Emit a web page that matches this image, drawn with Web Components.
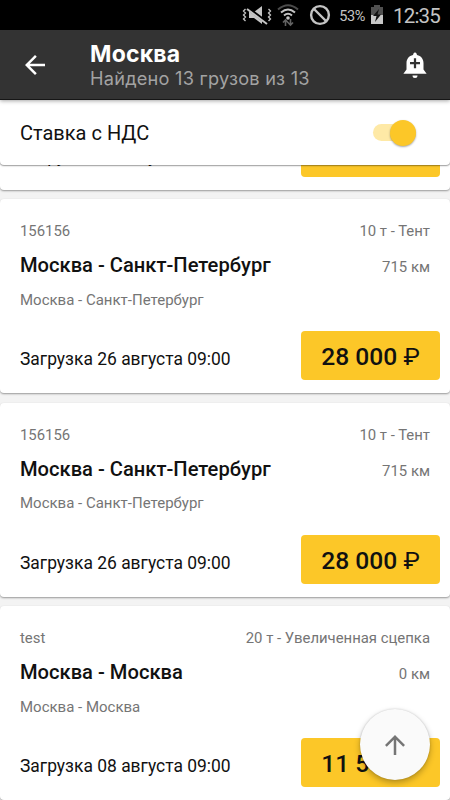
<!DOCTYPE html>
<html lang="ru">
<head>
<meta charset="utf-8">
<title>Москва</title>
<style>
  html, body { height: 100%; }
  body {
    --accent: #fcc728;
    --muted: #757575;
    --text: #111;
    margin: 0;
    background: #f3f3f3;
    color: var(--text);
    font-family: Roboto, "Noto Sans", sans-serif;
    overflow: hidden;
  }
</style>
</head>
<body>
<cargo-app>
  <status-bar slot="top" battery="53%" time="12:35"></status-bar>
  <app-header slot="top" heading="Москва">Найдено 13 грузов из 13</app-header>
  <filter-bar slot="top">Ставка с НДС</filter-bar>

  <!-- only the foot of the first card is scrolled into view -->
  <cargo-card loading="Загрузка 26 августа 09:00"></cargo-card>
  <cargo-card number="156156" body="10 т - Тент" route="Москва - Санкт-Петербург" distance="715 км" loading="Загрузка 26 августа 09:00" price="28 000"></cargo-card>
  <cargo-card number="156156" body="10 т - Тент" route="Москва - Санкт-Петербург" distance="715 км" loading="Загрузка 26 августа 09:00" price="28 000"></cargo-card>
  <cargo-card number="test" body="20 т - Увеличенная сцепка" route="Москва - Москва" distance="0 км" loading="Загрузка 08 августа 09:00" price="11 500"></cargo-card>

  <scroll-top slot="fab"></scroll-top>
</cargo-app>

<script>
/* Shadow root from a template string; attributes are copied into [data-attr] nodes. */
class BaseElement extends HTMLElement {
  constructor() {
    super();
    this.attachShadow({ mode: "open" }).innerHTML = this.constructor.template;
  }

  connectedCallback() {
    for (const node of this.shadowRoot.querySelectorAll("[data-attr]")) {
      node.textContent = this.getAttribute(node.dataset.attr) ?? "";
    }
  }
}

class CargoApp extends BaseElement {
  static template = /* html */ `
<style>
  :host {
    display: flex;
    flex-direction: column;
    position: relative;
    height: 100vh;
    overflow: hidden;
  }
  .top { position: relative; flex: none; }
  /* the list is scrolled to the bottom edge of its last card */
  .list {
    flex: 1;
    min-height: 0;
    display: flex;
    flex-direction: column;
    justify-content: flex-end;
    gap: 9.3px;
    overflow: hidden;
  }
</style>
<div class="top"><slot name="top"></slot></div>
<div class="list"><slot></slot></div>
<slot name="fab"></slot>`;
}

class StatusBar extends BaseElement {
  static template = /* html */ `
<style>
  :host {
    display: flex;
    align-items: center;
    justify-content: flex-end;
    height: 30px;
    padding-right: 10px;
    box-sizing: border-box;
    background: #000;
    color: #c4c4c4;
  }
  svg { display: block; flex: none; }
  .battery { font-size: 14.5px; letter-spacing: -0.45px; margin: 2px 5px 0 8px; }
  .time { font-size: 20.5px; letter-spacing: -0.8px; margin-left: 9px; padding-top: 2px; }
</style>
<svg width="30" height="22" viewBox="0 0 30 22" fill="none" stroke="#c4c4c4">
  <path d="M3.5 5l-2 2 2 2-2 2 2 2-2 2 2 2M26.500 5l2 2-2 2 2 2-2 2 2 2-2 2" stroke-width="1.300"/>
  <path d="M7 8h5l8-6v18l-8-6H7z" fill="#c4c4c4" stroke="none"/>
  <path d="M5 3.500l21 16" stroke="#000" stroke-width="3.500"/>
  <path d="M5 5l20 15" stroke-width="2"/>
</svg>
<svg style="margin-left:5px" width="22" height="24" viewBox="0 0 22 24" fill="none" stroke-width="2">
  <path d="M1 6.500q10-8.500 20 0" stroke="#4b4b4b"/>
  <path d="M4 9.500q7-6 14 0M7 12.500q4-3.500 8 0" stroke="#c4c4c4"/>
  <circle cx="11" cy="15" r="1.800" fill="#c4c4c4"/>
  <path d="M8.500 23v-6M6 19.500l2.500-2.500 2.500 2.500M13.500 16v6M11 19.500l2.500 2.500 2.500-2.500" stroke="#626262" stroke-width="1.600"/>
</svg>
<svg style="margin-left:10px" width="22" height="22" viewBox="0 0 22 22" fill="none" stroke="#c4c4c4" stroke-width="2.400">
  <circle cx="11" cy="11" r="8.900"/><path d="M5 5l12 12"/>
</svg>
<span class="battery" data-attr="battery"></span>
<svg width="14" height="20" viewBox="0 0 14 20">
  <path d="M4 0h6v2h3v8H1V2h3z" fill="#505050"/>
  <path d="M1 10h12v9H1z" fill="#c8c8c8"/>
  <path d="M9 4l-6 7h3.500L5 17l6-7.500H7.500z" fill="#111"/>
</svg>
<span class="time" data-attr="time"></span>`;
}

class AppHeader extends BaseElement {
  static template = /* html */ `
<style>
  :host {
    display: flex;
    align-items: center;
    height: 69.500px;
    padding: 0 20px;
    box-sizing: border-box;
    background: #333;
    border-bottom: 1px solid #161616;
    color: #fff;
    font-family: Inter, "Noto Sans", sans-serif;
    box-shadow: 0 1px 4px rgba(0, 0, 0, .35);
    position: relative;
    z-index: 1;
  }
  .titles { flex: 1; margin-left: 40px; padding-top: 1px; }
  .heading { font-size: 23px; line-height: 26px; font-weight: 700; letter-spacing: .2px; }
  .sub { font-size: 18.200px; line-height: 22px; letter-spacing: .22px; color: #a3a3a3; white-space: nowrap; }
  svg { display: block; flex: none; }
  .back { padding-top: 1px; }
  .bell { padding-top: 2px; }
</style>
<svg class="back" width="30" height="30" viewBox="0 0 24 24" fill="#fff"><path d="M20 11H7.830l5.590-5.590L12 4l-8 8 8 8 1.410-1.410L7.830 13H20v-2z"/></svg>
<div class="titles">
  <div class="heading" data-attr="heading"></div>
  <div class="sub"><slot></slot></div>
</div>
<svg class="bell" width="30" height="30" viewBox="0 0 24 24" fill="#fff">
  <path fill-rule="evenodd" d="M10 20.300a2 2 0 0 0 4 0zM18.800 15.500V10.500c0-3.400-2-5.800-5.200-6.500l-.4-1.200a1.300 1.300 0 0 0-2.400 0L10.400 4c-3.200.7-5.200 3.100-5.200 6.500v5L2.700 19h18.600zM11.100 6.500h1.800v3.100H16v1.800h-3.100v3.100h-1.800v-3.100H8V9.600h3.100z"/>
</svg>`;
}

class FilterBar extends BaseElement {
  static template = /* html */ `
<style>
  :host {
    display: flex;
    align-items: center;
    justify-content: space-between;
    position: relative;
    height: 65.500px;
    padding: 1px 34px 0 20px;
    box-sizing: border-box;
    background: #fff;
    border-radius: 0 0 4px 4px;
    box-shadow: 0 1px 1.500px rgba(0, 0, 0, .4);
    font-size: 20px;
  }
  .track {
    display: flex;
    justify-content: flex-end;
    align-items: center;
    width: 43px;
    height: 17px;
    border-radius: 9px;
    background: #fee9a6;
  }
  .thumb {
    width: 26px;
    height: 26px;
    border-radius: 50%;
    background: var(--accent);
    box-shadow: 0 1px 2px rgba(0, 0, 0, .35);
  }
</style>
<span><slot></slot></span>
<div class="track"><div class="thumb"></div></div>`;
}

class CargoCard extends BaseElement {
  static template = /* html */ `
<style>
  :host {
    display: flex;
    flex-direction: column;
    flex: none;
    height: 194px;
    padding: 23px 10px 13px 20px;
    box-sizing: border-box;
    background: #fff;
    border-radius: 4px;
    box-shadow: 0 1px 2px rgba(0, 0, 0, .38);
  }
  .row {
    display: flex;
    justify-content: space-between;
    padding-right: 10px;
    color: var(--muted);
    font-size: 14.900px;
    line-height: 18px;
  }
  .main { align-items: baseline; margin-top: 12.800px; line-height: 24px; }
  .route { color: var(--text); font-size: 20.150px; font-weight: 500; }
  .sub { margin-top: 11.800px; font-size: 15px; }
  .bottom { display: flex; justify-content: space-between; align-items: center; margin-top: auto; }
  .loading { font-size: 17.450px; padding-top: 7px; }
  .price {
    display: flex;
    align-items: center;
    justify-content: center;
    width: 139px;
    height: 49px;
    padding-top: 2px;
    box-sizing: border-box;
    border-radius: 4px;
    background: var(--accent);
    font-size: 24.600px;
    font-weight: 500;
    white-space: pre;
  }
  .currency { font-weight: 400; }
</style>
<div class="row"><span data-attr="number"></span><span data-attr="body"></span></div>
<div class="row main"><span class="route" data-attr="route"></span><span data-attr="distance"></span></div>
<div class="row sub"><span data-attr="route"></span></div>
<div class="bottom">
  <span class="loading" data-attr="loading"></span>
  <div class="price"><span data-attr="price"></span><span class="currency"></span></div>
</div>`;

  connectedCallback() {
    super.connectedCallback();
    if (this.hasAttribute("price")) {
      this.shadowRoot.querySelector(".currency").textContent = " ₽";
    }
  }
}

class ScrollTop extends BaseElement {
  static template = /* html */ `
<style>
  :host {
    display: flex;
    align-items: center;
    justify-content: center;
    position: absolute;
    right: 20px;
    bottom: 20px;
    width: 70px;
    height: 71px;
    border-radius: 50%;
    background: #fafafa;
    box-shadow: 0 3px 6px rgba(0, 0, 0, .28), 0 0 2px rgba(0, 0, 0, .18);
    z-index: 2;
  }
</style>
<svg width="30" height="30" viewBox="0 0 24 24" fill="#757575"><path d="M4 12l1.410 1.410L11 7.830V20h2V7.830l5.580 5.590L20 12l-8-8-8 8z"/></svg>`;
}

customElements.define("cargo-app", CargoApp);
customElements.define("status-bar", StatusBar);
customElements.define("app-header", AppHeader);
customElements.define("filter-bar", FilterBar);
customElements.define("cargo-card", CargoCard);
customElements.define("scroll-top", ScrollTop);
</script>
</body>
</html>
